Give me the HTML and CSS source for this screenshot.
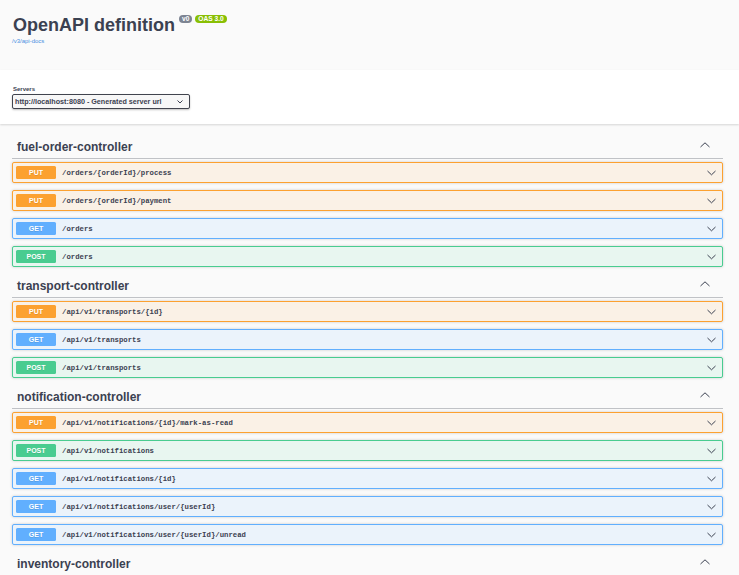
FILE: index.html
```html
<!DOCTYPE html>
<html lang="en">
<head>
<meta charset="utf-8">
<title>Swagger UI</title>
<link rel="stylesheet" href="styles.css">
</head>
<body>
<div class="info">
  <h2 class="title"><span class="name">OpenAPI definition</span><small class="badge ver">v0</small><small class="badge oas">OAS 3.0</small></h2>
  <a class="url" href="#">/v3/api-docs</a>
</div>
<div class="scheme">
  <div class="label">Servers</div>
  <div class="select"><span>http://localhost:8080 - Generated server url</span><svg class="sel-arrow" width="6" height="4" viewBox="0 0 6 4"><polyline points="0.5,0.5 3,3 5.5,0.5" fill="none" stroke="#3b4151" stroke-width="1"/></svg></div>
</div>
<div class="tags">
  <section class="tag">
    <h3 class="tag-head"><span>fuel-order-controller</span><svg class="up" width="10" height="6" viewBox="0 0 10 6"><polyline points="0.5,5 5,0.8 9.5,5" fill="none" stroke="#3b4151" stroke-width="1"/></svg></h3>
    <div class="op put"><span class="m">PUT</span><span class="p">/orders/{orderId}/process</span><svg class="down" width="9" height="6" viewBox="0 0 9 6"><polyline points="0.5,1 4.5,4.8 8.5,1" fill="none" stroke="#3b4151" stroke-width="1"/></svg></div>
    <div class="op put"><span class="m">PUT</span><span class="p">/orders/{orderId}/payment</span><svg class="down" width="9" height="6" viewBox="0 0 9 6"><polyline points="0.5,1 4.5,4.8 8.5,1" fill="none" stroke="#3b4151" stroke-width="1"/></svg></div>
    <div class="op get"><span class="m">GET</span><span class="p">/orders</span><svg class="down" width="9" height="6" viewBox="0 0 9 6"><polyline points="0.5,1 4.5,4.8 8.5,1" fill="none" stroke="#3b4151" stroke-width="1"/></svg></div>
    <div class="op post"><span class="m">POST</span><span class="p">/orders</span><svg class="down" width="9" height="6" viewBox="0 0 9 6"><polyline points="0.5,1 4.5,4.8 8.5,1" fill="none" stroke="#3b4151" stroke-width="1"/></svg></div>
  </section>
  <section class="tag">
    <h3 class="tag-head"><span>transport-controller</span><svg class="up" width="10" height="6" viewBox="0 0 10 6"><polyline points="0.5,5 5,0.8 9.5,5" fill="none" stroke="#3b4151" stroke-width="1"/></svg></h3>
    <div class="op put"><span class="m">PUT</span><span class="p">/api/v1/transports/{id}</span><svg class="down" width="9" height="6" viewBox="0 0 9 6"><polyline points="0.5,1 4.5,4.8 8.5,1" fill="none" stroke="#3b4151" stroke-width="1"/></svg></div>
    <div class="op get"><span class="m">GET</span><span class="p">/api/v1/transports</span><svg class="down" width="9" height="6" viewBox="0 0 9 6"><polyline points="0.5,1 4.5,4.8 8.5,1" fill="none" stroke="#3b4151" stroke-width="1"/></svg></div>
    <div class="op post"><span class="m">POST</span><span class="p">/api/v1/transports</span><svg class="down" width="9" height="6" viewBox="0 0 9 6"><polyline points="0.5,1 4.5,4.8 8.5,1" fill="none" stroke="#3b4151" stroke-width="1"/></svg></div>
  </section>
  <section class="tag">
    <h3 class="tag-head"><span>notification-controller</span><svg class="up" width="10" height="6" viewBox="0 0 10 6"><polyline points="0.5,5 5,0.8 9.5,5" fill="none" stroke="#3b4151" stroke-width="1"/></svg></h3>
    <div class="op put"><span class="m">PUT</span><span class="p">/api/v1/notifications/{id}/mark-as-read</span><svg class="down" width="9" height="6" viewBox="0 0 9 6"><polyline points="0.5,1 4.5,4.8 8.5,1" fill="none" stroke="#3b4151" stroke-width="1"/></svg></div>
    <div class="op post"><span class="m">POST</span><span class="p">/api/v1/notifications</span><svg class="down" width="9" height="6" viewBox="0 0 9 6"><polyline points="0.5,1 4.5,4.8 8.5,1" fill="none" stroke="#3b4151" stroke-width="1"/></svg></div>
    <div class="op get"><span class="m">GET</span><span class="p">/api/v1/notifications/{id}</span><svg class="down" width="9" height="6" viewBox="0 0 9 6"><polyline points="0.5,1 4.5,4.8 8.5,1" fill="none" stroke="#3b4151" stroke-width="1"/></svg></div>
    <div class="op get"><span class="m">GET</span><span class="p">/api/v1/notifications/user/{userId}</span><svg class="down" width="9" height="6" viewBox="0 0 9 6"><polyline points="0.5,1 4.5,4.8 8.5,1" fill="none" stroke="#3b4151" stroke-width="1"/></svg></div>
    <div class="op get"><span class="m">GET</span><span class="p">/api/v1/notifications/user/{userId}/unread</span><svg class="down" width="9" height="6" viewBox="0 0 9 6"><polyline points="0.5,1 4.5,4.8 8.5,1" fill="none" stroke="#3b4151" stroke-width="1"/></svg></div>
  </section>
  <section class="tag">
    <h3 class="tag-head"><span>inventory-controller</span><svg class="up" width="10" height="6" viewBox="0 0 10 6"><polyline points="0.5,5 5,0.8 9.5,5" fill="none" stroke="#3b4151" stroke-width="1"/></svg></h3>
  </section>
</div>
</body>
</html>
```

FILE: styles.css
```css
html, body {
  margin: 0;
  padding: 0;
}
body {
  background: #fafafa;
  font-family: "Liberation Sans", Arial, sans-serif;
  color: #3b4151;
  overflow: hidden;
}
.info {
  height: 70px;
  box-sizing: border-box;
  padding: 15px 12px 0 13px;
}
.title {
  display: flex;
  align-items: flex-start;
  margin: 0;
  font-size: 18px;
  line-height: 20px;
  font-weight: bold;
  color: #3b4151;
}
.badge {
  display: block;
  margin-left: 4px;
  padding: 0 3px;
  height: 8px;
  line-height: 8.5px;
  font-size: 6.6px;
  font-weight: bold;
  color: #fff;
  border-radius: 10px;
}
.ver {
  background: #7d8492;
}
.oas {
  background: #89bf04;
  margin-left: 3px;
}
.url {
  display: block;
  margin-top: 2px;
  margin-left: -1px;
  font-size: 6px;
  line-height: 8px;
  color: #4990e2;
  text-decoration: none;
}
.scheme {
  height: 54px;
  box-sizing: border-box;
  padding: 16px 12px 0;
  background: #fff;
  box-shadow: 0 1px 2px 0 rgba(0, 0, 0, 0.15);
}
.label {
  margin-left: 1px;
  margin-bottom: 1px;
  font-size: 6px;
  line-height: 7px;
  font-weight: bold;
}
.select {
  display: flex;
  align-items: center;
  width: 178px;
  height: 15px;
  box-sizing: border-box;
  padding: 0 6px 0 2px;
  border: 1px solid #41444e;
  border-radius: 2px;
  background: #f7f7f7;
  box-shadow: 0 1px 2px 0 rgba(0, 0, 0, 0.25);
  font-size: 7.2px;
  font-weight: bold;
  color: #3b4151;
  white-space: nowrap;
}
.sel-arrow {
  margin-left: auto;
}
.tags {
  margin-top: 11px;
  padding: 0 16px 0 12px;
}
.tag-head {
  display: flex;
  align-items: center;
  height: 23px;
  margin: 0 0 3px;
  padding: 0 0 0 5px;
  border-bottom: 1px solid rgba(59, 65, 81, 0.3);
  font-size: 12px;
  font-weight: bold;
  color: #3b4151;
}
.up {
  margin-left: auto;
  margin-right: 13px;
  margin-top: -3px;
}
.op {
  display: flex;
  align-items: center;
  height: 21px;
  box-sizing: border-box;
  margin-bottom: 7px;
  padding: 0 6px 0 3px;
  border: 1px solid;
  border-radius: 2px;
  box-shadow: 0 0 3px rgba(0, 0, 0, 0.19);
}
.m {
  width: 40px;
  height: 13px;
  line-height: 13px;
  border-radius: 1.5px;
  text-align: center;
  font-size: 7px;
  font-weight: bold;
  color: #fff;
  text-shadow: 0 0.5px 0 rgba(0, 0, 0, 0.1);
}
.p {
  margin-left: 6px;
  font-family: "Liberation Mono", "DejaVu Sans Mono", monospace;
  font-size: 7.3px;
  font-weight: bold;
  color: #3b4151;
}
.down {
  margin-left: auto;
}
.put {
  border-color: #fca130;
  background: #faf1e6;
}
.put .m {
  background: #fca130;
}
.get {
  border-color: #61affe;
  background: #ebf3fb;
}
.get .m {
  background: #61affe;
}
.post {
  border-color: #49cc90;
  background: #e8f6f0;
}
.post .m {
  background: #49cc90;
}
```
